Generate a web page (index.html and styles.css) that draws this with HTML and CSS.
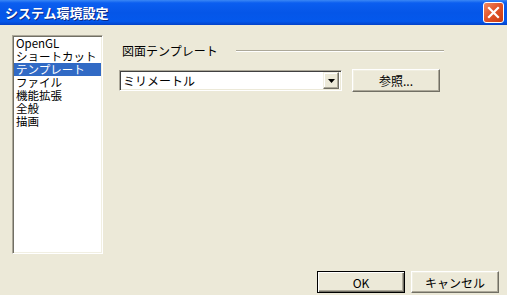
FILE: index.html
```html
<!DOCTYPE html>
<html lang="ja">
<head>
    <meta charset="UTF-8">
    <title>システム環境設定</title>
    <link rel="stylesheet" href="styles.css">
</head>
<body>
    <div class="window">
        <div class="titlebar">
            <span class="title">システム環境設定</span>
            <button class="close-button" aria-label="閉じる">
                <svg width="13" height="13" viewBox="0 0 13 13">
                    <path d="M2 2 L11 11 M11 2 L2 11" stroke="#fff" stroke-width="2.2" stroke-linecap="square"/>
                </svg>
            </button>
        </div>
        <div class="content">
            <ul class="category-list">
                <li>OpenGL</li>
                <li>ショートカット</li>
                <li class="selected">テンプレート</li>
                <li>ファイル</li>
                <li>機能拡張</li>
                <li>全般</li>
                <li>描画</li>
            </ul>
            <div class="panel">
                <div class="group-head">
                    <span>図面テンプレート</span>
                    <span class="rule"></span>
                </div>
                <div class="template-row">
                    <div class="combo">
                        <span class="combo-text">ミリメートル</span>
                        <span class="combo-button">
                            <svg width="7" height="4" viewBox="0 0 7 4"><path d="M0 0 H7 L3.5 4 Z" fill="#000"/></svg>
                        </span>
                    </div>
                    <button class="btn browse">参照...</button>
                </div>
            </div>
        </div>
        <div class="footer">
            <button class="btn default">OK</button>
            <button class="btn">キャンセル</button>
        </div>
    </div>
</body>
</html>
```

FILE: styles.css
```css
body {
    margin: 0;
    background-color: #ece9d8;
    font-family: "Noto Sans CJK JP", "DejaVu Sans", sans-serif;
    font-size: 12px;
    color: #000;
}
.window {
    width: 507px;
    height: 295px;
    display: flex;
    flex-direction: column;
    overflow: hidden;
}
.titlebar {
    height: 25px;
    display: flex;
    align-items: center;
    justify-content: space-between;
    padding: 0 3px 0 5px;
    background: linear-gradient(to bottom, #3a87f5 0%, #0b5ef0 12%, #0556e8 50%, #0458ec 85%, #0442c8 100%);
}
.title {
    color: #fff;
    font-weight: bold;
    font-size: 13px;
    text-shadow: 1px 1px #0a2a8a;
}
.close-button {
    width: 21px;
    height: 21px;
    padding: 0;
    border: 1px solid #fff;
    border-radius: 3px;
    background: linear-gradient(135deg, #f08a64 0%, #e2562c 45%, #c93b10 100%);
    display: flex;
    align-items: center;
    justify-content: center;
}
.content {
    display: flex;
    padding: 10px 0 0 12px;
}
.category-list {
    list-style: none;
    margin: 0;
    padding: 1px 0;
    width: 91px;
    height: 219px;
    box-sizing: border-box;
    background: #fff;
    border: 1px solid;
    border-color: #aca899 #fff #fff #aca899;
    box-shadow: inset 1px 1px #716f64, inset -1px -1px #f1efe2;
    font-size: 11.5px;
}
.category-list li {
    height: 13px;
    line-height: 13px;
    padding-left: 2px;
    margin: 0 1px;
    white-space: nowrap;
}
.category-list li.selected {
    background: #316ac5;
    color: #fff;
}
.panel {
    width: 325px;
    margin-left: 16px;
    padding-top: 9px;
}
.group-head {
    display: flex;
    align-items: center;
    padding-left: 3px;
    height: 14px;
    line-height: 14px;
}
.rule {
    flex: 1;
    margin-left: 18px;
    height: 0;
    border-top: 1px solid #aca899;
    border-bottom: 1px solid #fff;
}
.template-row {
    display: flex;
    align-items: center;
    gap: 10px;
    margin-top: 11px;
}
.combo {
    width: 223px;
    height: 21px;
    box-sizing: border-box;
    display: flex;
    align-items: center;
    background: #fff;
    border: 1px solid;
    border-color: #aca899 #fff #fff #aca899;
    box-shadow: inset 1px 1px #404040, inset -1px -1px #ece9d8;
    padding: 2px;
}
.combo-text {
    flex: 1;
    padding-left: 1px;
    line-height: 15px;
}
.combo-button {
    width: 16px;
    height: 17px;
    box-sizing: border-box;
    display: flex;
    align-items: center;
    justify-content: center;
    background: #ece9d8;
    border: 1px solid;
    border-color: #f1efe2 #716f64 #716f64 #f1efe2;
    box-shadow: inset -1px -1px #aca899, inset 1px 1px #fff;
}
.btn {
    width: 88px;
    height: 22px;
    padding: 0;
    font-family: "Noto Sans CJK JP", "DejaVu Sans", sans-serif;
    font-size: 12px;
    color: #000;
    background: #ece9d8;
    border: 1px solid;
    border-color: #fff #716f64 #716f64 #fff;
    box-shadow: inset -1px -1px #aca899, inset 1px 1px #f1efe2;
}
.browse {
    height: 23px;
}
.footer {
    display: flex;
    justify-content: flex-end;
    gap: 6px;
    padding-right: 8px;
    margin-top: 17px;
}
.btn.default {
    border-color: #000;
    box-shadow: inset 1px 1px #fff, inset -1px -1px #716f64, inset -2px -2px #aca899;
}
```
